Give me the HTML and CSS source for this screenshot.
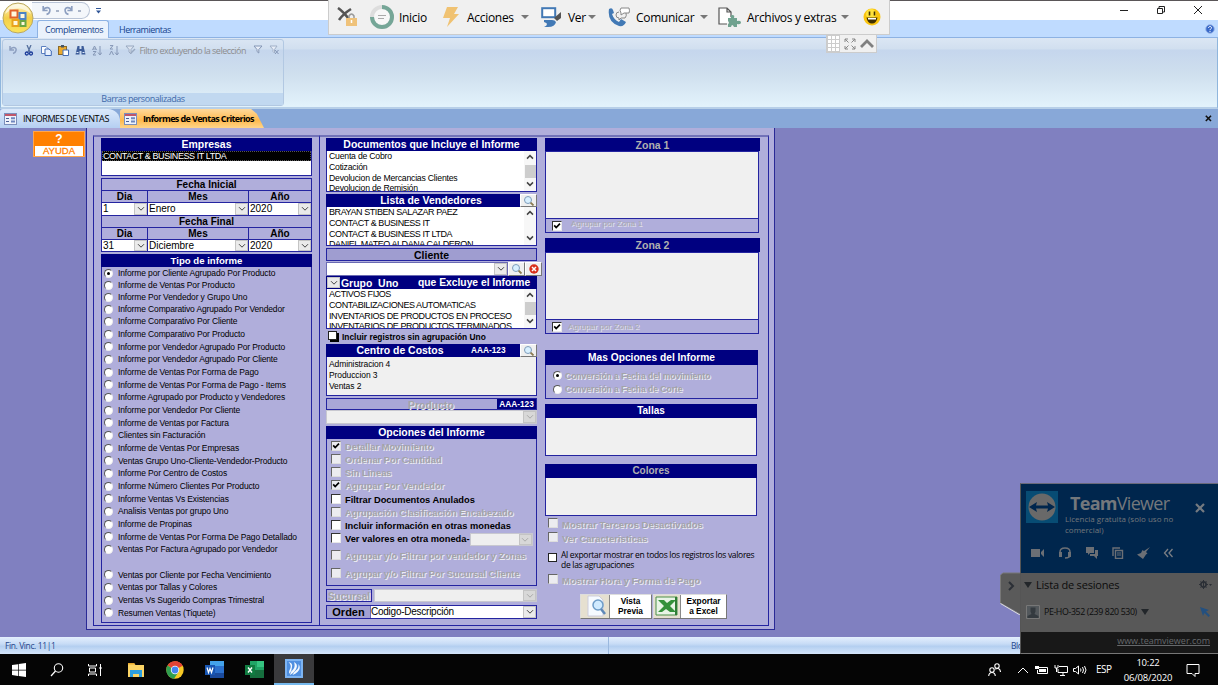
FILE: index.html
```html
<!DOCTYPE html>
<html lang="es">
<head>
<meta charset="utf-8">
<title>Informes de Ventas Criterios</title>
<link rel="stylesheet" href="styles.css">
</head>
<body>
<svg class="defs" width="0" height="0">
  <defs>
    <linearGradient id="gold" x1="0" y1="0" x2="0" y2="1"><stop offset="0" stop-color="#fff6c8"/><stop offset=".5" stop-color="#f3cf4a"/><stop offset="1" stop-color="#fbe45c"/></linearGradient>
    <symbol id="chev" viewBox="0 0 8 6"><path d="M1 1.2 4 4.2 7 1.2" fill="none" stroke="currentColor" stroke-width="1"/></symbol>
    <symbol id="chevup" viewBox="0 0 8 6"><path d="M1 4.6 4 1.6 7 4.6" fill="none" stroke="#444" stroke-width="1.5"/></symbol>
    <symbol id="chevdn" viewBox="0 0 8 6"><path d="M1 1.4 4 4.4 7 1.4" fill="none" stroke="#444" stroke-width="1.5"/></symbol>
    <symbol id="lens" viewBox="0 0 12 12"><circle cx="5" cy="5" r="3.5" fill="#d8f0ff" stroke="#7f9dbb" stroke-width="1"/><path d="M7.6 7.6 10.5 10.5" stroke="#8a7a50" stroke-width="1.8"/></symbol>
    <symbol id="tick" viewBox="0 0 8 8"><path d="M1.2 3.4 3.2 5.6 7 1.6" fill="none" stroke="#000" stroke-width="1.7"/></symbol>
    <symbol id="formico" viewBox="0 0 13 12"><rect x=".5" y=".5" width="12" height="11" fill="#eef2fb" stroke="#7c8fbb"/><path d="M1 1h11v2H1z" fill="#c0566a"/><path d="M2 5.5h3M2 8.5h3" stroke="#4a5f96"/><path d="M7 5.2h4M7 8.4h4" stroke="#6f86bd" stroke-width="2"/></symbol>
    <symbol id="undo" viewBox="0 0 10 10"><path d="M2 1v4h4M2 5C4 1 9 2 8 5.500Q7.500 8 5 8.500" fill="none" stroke="#8d9fc0" stroke-width="1.500"/></symbol>
  </defs>
</svg>

<div class="titlebar">
  <div class="qat">
    <svg width="11" height="11"><use href="#undo"/></svg><i class="dot"></i>
    <svg width="11" height="11" class="flip"><use href="#undo"/></svg><i class="dot"></i>
  </div>
  <svg class="qatmore" width="5" height="6" viewBox="0 0 5 6"><path d="M0 .5h5" stroke="#2f5597"/><path d="M0 2.500h5L2.500 5.500z" fill="#2f5597"/></svg>
  <div class="wincontrols">
    <svg width="10" height="10"><path d="M1 5.500h8" stroke="#222"/></svg>
    <svg width="10" height="10"><path d="M1.500 3.500h5v5h-5zM3 3V1.500h5.500V7H7" fill="none" stroke="#222"/></svg>
    <svg width="10" height="10"><path d="M1 1l8 8M9 1 1 9" stroke="#222"/></svg>
  </div>
</div>
<div class="tabs">
  <span class="tab active">Complementos</span><span class="tab">Herramientas</span>
  <svg class="help" width="10" height="10" viewBox="0 0 10 10"><circle cx="5" cy="5" r="4.300" fill="#3767c8" stroke="#9bb8ea"/><path d="M3.500 4C3.500 2 6.700 2 6.500 4 6.300 5 5 5 5 6.200M5 7v1" fill="none" stroke="#fff"/></svg>
</div>
<div class="office">
  <svg width="34" height="34" viewBox="0 0 34 34"><circle cx="17" cy="17" r="15" fill="url(#gold)" stroke="#b9a763"/><path d="M4 13Q17 2 30 13Q27 3 17 3 7 3 4 13z" fill="#fff" opacity=".6"/><g fill="#fff7dc" stroke-width="2"><rect x="9.500" y="9.500" width="7" height="7" stroke="#e2622b"/><rect x="18.500" y="12" width="6" height="6" stroke="#4a83c4"/><rect x="11.500" y="19" width="6" height="6" stroke="#e9a31c"/><rect x="19.500" y="20" width="5" height="5" stroke="#6ba644"/></g></svg>
</div>
<div class="ribbon">
  <div class="group">
    <div class="tools">
      <svg width="10" height="10"><use href="#undo"/></svg>
      <svg width="10" height="11" viewBox="0 0 10 11"><path d="M3 0 6 7M7 0 4 7" stroke="#56709e" stroke-width="1.300"/><circle cx="2.800" cy="8.500" r="1.500" fill="none" stroke="#1c3c9a" stroke-width="1.300"/><circle cx="7" cy="8.500" r="1.500" fill="none" stroke="#1c3c9a" stroke-width="1.300"/></svg>
      <svg width="11" height="11" viewBox="0 0 11 11"><path d="M.5 1.500h4.500l2 2v5H.5z" fill="#fff" stroke="#5b7fc0"/><path d="M4 4h4l2.300 2v4.500H4z" fill="#e8f0fd" stroke="#3f68b5"/></svg>
      <svg width="11" height="11" viewBox="0 0 11 11"><rect x=".5" y="1.500" width="8" height="8" fill="#eba92c" stroke="#8a6a2a"/><path d="M3 0h3v2.500H3z" fill="#456"/><path d="M5 5h5.500v5.500H5z" fill="#fff" stroke="#456eb5"/></svg>
      <svg width="11" height="11" viewBox="0 0 11 11"><path d="M2.500 1h2v3h2V1h2L10.500 9.500H6.500V6h-2v3.500H.5z" fill="#3d5d9a"/><path d="M1.500 7.500h2M7.500 7.500h2" stroke="#dce8fa"/></svg>
      <svg width="10" height="11" viewBox="0 0 10 11"><path d="M.5 5 2.500 1l2 4M1 4h3M1 6.500h3l-3 3.500h3M8 1v8M6 7.500 8 10l1.900-2.500" fill="none" stroke="#8496b5"/></svg>
      <svg width="10" height="11" viewBox="0 0 10 11"><path d="M1 .6h3L1 4h3M.5 10 2.500 6l2 4M8 1v8M6 7.500 8 10l1.900-2.500" fill="none" stroke="#8496b5"/></svg>
      <svg width="11" height="10" viewBox="0 0 11 10"><path d="M1 1h8L6 4.500V9L4 7V4.500z" fill="#dce4f0" stroke="#98a8c0"/><path d="M6 8l4-4" stroke="#98a8c0" stroke-width="1.500"/></svg>
      <span>Filtro excluyendo la selección</span>
      <svg width="10" height="10" viewBox="0 0 10 10"><path d="M1 1h8L5.800 4.500V8L4 6.500v-2z" fill="#e8eef8" stroke="#8496b5"/></svg>
      <svg width="10" height="10" viewBox="0 0 10 10"><path d="M1 1h7L5.500 4.500V8L4 6.500v-2z" fill="#e8eef8" stroke="#a0afc6"/><path d="M6 5l3.500 4M9.500 5 6 9" stroke="#8496b5"/></svg>
    </div>
    <div class="grouplabel">Barras personalizadas</div>
  </div>
</div>
<div class="doctabs">
  <div class="dtab"><svg width="13" height="12"><use href="#formico"/></svg><span>INFORMES DE VENTAS</span></div>
  <div class="dtab on"><svg width="13" height="12"><use href="#formico"/></svg><b>Informes de Ventas Criterios</b></div>
  <svg class="dclose" width="7" height="7"><path d="M.8 .8l5.200 5.200M6 .8.800 6" stroke="#111" stroke-width="1.600"/></svg>
</div>

<div class="main">
  <div class="ayuda"><b>?</b><span>AYUDA</span></div>
  <div class="form">
    <div class="frame fleft">
      <div class="hd">Empresas</div>
      <div class="emp"><div>CONTACT &amp; BUSINESS IT LTDA</div></div>
      <div class="dates">
        <div class="dt">Fecha Inicial</div>
        <div class="dr lab"><b>Dia</b><b>Mes</b><b>Año</b></div>
        <div class="dr val"><span>1<i><svg><use href="#chev"/></svg></i></span><span>Enero<i><svg><use href="#chev"/></svg></i></span><span>2020<i><svg><use href="#chev"/></svg></i></span></div>
        <div class="dt">Fecha Final</div>
        <div class="dr lab l2"><b>Dia</b><b>Mes</b><b>Año</b></div>
        <div class="dr val"><span>31<i><svg><use href="#chev"/></svg></i></span><span>Diciembre<i><svg><use href="#chev"/></svg></i></span><span>2020<i><svg><use href="#chev"/></svg></i></span></div>
      </div>
      <div class="hd small tipohd">Tipo de informe</div>
      <div class="tipos">
        <div class="on"><i></i>Informe por Cliente Agrupado Por Producto</div>
        <div><i></i>Informe de Ventas Por Producto</div>
        <div><i></i>Informe Por Vendedor y Grupo Uno</div>
        <div><i></i>Informe Comparativo Agrupado Por Vendedor</div>
        <div><i></i>Informe Comparativo Por Cliente</div>
        <div><i></i>Informe Comparativo Por Producto</div>
        <div><i></i>Informe por Vendedor Agrupado Por Producto</div>
        <div><i></i>Informe por Vendedor Agrupado Por Cliente</div>
        <div><i></i>Informe de Ventas Por Forma de Pago</div>
        <div><i></i>Informe de Ventas Por Forma de Pago - Items</div>
        <div><i></i>Informe Agrupado por Producto y Vendedores</div>
        <div><i></i>Informe por Vendedor Por Cliente</div>
        <div><i></i>Informe de Ventas por Factura</div>
        <div><i></i>Clientes sin Facturación</div>
        <div><i></i>Informe de Ventas Por Empresas</div>
        <div><i></i>Ventas Grupo Uno-Cliente-Vendedor-Producto</div>
        <div><i></i>Informe Por Centro de Costos</div>
        <div><i></i>Informe Número Clientes Por Producto</div>
        <div><i></i>Informe Ventas Vs Existencias</div>
        <div><i></i>Analisis Ventas por grupo Uno</div>
        <div><i></i>Informe de Propinas</div>
        <div><i></i>Informe de Ventas Por Forma De Pago Detallado</div>
        <div><i></i>Ventas Por Factura Agrupado por Vendedor</div>
        <div class="blank"></div>
        <div><i></i>Ventas por Cliente por Fecha Vencimiento</div>
        <div><i></i>Ventas por Tallas y Colores</div>
        <div><i></i>Ventas Vs Sugerido Compras Trimestral</div>
        <div><i></i>Resumen Ventas (Tiquete)</div>
      </div>
    </div>
    <div class="frame fright">
      <div class="c2">
        <div class="hd">Documentos que Incluye el Informe</div>
        <div class="list docs"><div class="items">Cuenta de Cobro<br>Cotización<br>Devolucion de Mercancias Clientes<br>Devolucion de Remisión</div><div class="sb"><svg><use href="#chevup"/></svg><u></u><svg><use href="#chevdn"/></svg></div></div>
        <div class="hd g2"><span>Lista de Vendedores</span><em class="lb"><svg width="12" height="12"><use href="#lens"/></svg></em></div>
        <div class="list vend"><div class="items">BRAYAN STIBEN SALAZAR PAEZ<br>CONTACT &amp; BUSINESS IT<br>CONTACT &amp; BUSINESS IT LTDA<br>DANIEL MATEO ALDANA CALDERON</div><div class="sb"><svg><use href="#chevup"/></svg><svg><use href="#chevdn"/></svg></div></div>
        <div class="bar cliente">Cliente</div>
        <div class="clirow"><span class="combo"><i><svg><use href="#chev"/></svg></i></span><em class="lb"><svg width="12" height="12"><use href="#lens"/></svg></em><em class="lb"><svg width="10" height="10" viewBox="0 0 10 10"><circle cx="5" cy="5" r="4.700" fill="#d8301c"/><path d="M3 3l4 4M7 3 3 7" stroke="#fff" stroke-width="1.500"/></svg></em></div>
        <div class="hd grupo"><i><svg><use href="#chev"/></svg></i><span>Grupo&nbsp; Uno</span><b>que Excluye el Informe</b></div>
        <div class="list grp"><div class="items">ACTIVOS FIJOS<br>CONTABILIZACIONES AUTOMATICAS<br>INVENTARIOS DE PRODUCTOS EN PROCESO<br>INVENTARIOS DE PRODUCTOS TERMINADOS</div><div class="sb"><svg><use href="#chevup"/></svg><u></u><svg><use href="#chevdn"/></svg></div></div>
        <div class="incl"><i></i>Incluir registros sin agrupación Uno</div>
        <div class="hd centro"><span>Centro de Costos</span><small>AAA-123</small><em class="lb"><svg width="12" height="12"><use href="#lens"/></svg></em></div>
        <div class="list cc"><div class="items">Administracion 4<br>Produccion 3<br>Ventas 2</div></div>
        <div class="prod"><span class="emb">Producto</span><small>AAA-123</small></div>
        <div class="combo dis prodc"><i><svg><use href="#chev"/></svg></i></div>
        <div class="hd ophd">Opciones del Informe</div>
        <div class="opts">
          <div class="d"><i class="ck"><svg width="8" height="8"><use href="#tick"/></svg></i>Detallar Movimiento</div>
          <div class="d"><i class="ck"></i>Ordenar Por Cantidad</div>
          <div class="d"><i class="ck"></i>Sin Lineas</div>
          <div class="d"><i class="ck"><svg width="8" height="8"><use href="#tick"/></svg></i>Agrupar Por Vendedor</div>
          <div><i class="ck"></i>Filtrar Documentos Anulados</div>
          <div class="d"><i class="ck"></i>Agrupación Clasificación Encabezado</div>
          <div><i class="ck"></i>Incluir información en otras monedas</div>
          <div class="mon"><i class="ck"></i><span>Ver valores en otra moneda-</span><span class="combo dis"><i><svg><use href="#chev"/></svg></i></span></div>
          <div class="d tall"><i class="ck"></i>Agrupar y/o Filtrar por vendedor y Zonas</div>
          <div class="d tall2"><i class="ck"></i>Agrupar y/o Filtrar Por Sucursal Cliente</div>
        </div>
        <div class="suc"><span class="emb">Sucursal</span><span class="combo dis"><i><svg><use href="#chev"/></svg></i></span></div>
        <div class="ord"><b>Orden</b><span class="combo">Codigo-Descripción<i><svg><use href="#chev"/></svg></i></span></div>
      </div>
      <div class="c3">
        <div class="hd gray z">Zona 1</div><div class="pane zp"></div>
        <div class="zf"><i class="ck"><svg width="8" height="8"><use href="#tick"/></svg></i><span>Agrupar por Zona 1</span></div>
        <div class="hd gray z z2">Zona 2</div><div class="pane zp"></div>
        <div class="zf f2"><i class="ck"><svg width="8" height="8"><use href="#tick"/></svg></i><span>Agrupar por Zona 2</span></div>
        <div class="hd mas">Mas Opciones del Informe</div>
        <div class="conv"><div class="on"><i></i>Conversión a Fecha del movimiento</div><div><i></i>Conversión a Fecha de Corte</div></div>
        <div class="hd tl">Tallas</div><div class="pane tp"></div>
        <div class="hd gray tl co">Colores</div><div class="pane tp"></div>
        <div class="chk3">
          <div class="d"><i class="ck"></i>Mostrar Terceros Desactivados</div>
          <div class="d"><i class="ck"></i>Ver Caracteristicas</div>
          <div class="exp"><i></i><span>Al exportar mostrar en todos los registros los valores<br>de las agrupaciones</span></div>
          <div class="d"><i class="ck"></i>Mostrar Hora y Forma de Pago</div>
        </div>
        <div class="btns">
          <div class="btn"><em><svg width="22" height="22" viewBox="0 0 22 22"><path d="M3 1h11l4 4v16H3z" fill="#f6faff" stroke="#ccd"/><circle cx="13" cy="10" r="5" fill="#cfeaff" stroke="#6d9cc8" stroke-width="1.500"/><path d="M16 14l4 5" stroke="#5f88b8" stroke-width="2.500"/></svg></em><b>Vista<br>Previa</b></div>
          <div class="btn x"><em><svg width="24" height="22" viewBox="0 0 24 22"><path d="M1 2h21v18H1z" fill="#e9f4e6" stroke="#4d8f4b"/><path d="M3 5h6l3 3 4-3h5l-6 6 6 6h-6l-4-3-4 3H3l6-6z" fill="#35913b"/><path d="M21 2v18" stroke="#2f7d36" stroke-width="2"/></svg></em><b>Exportar<br>a Excel</b></div>
        </div>
      </div>
    </div>
  </div>
</div>

<div class="status"><span class="fin">Fin. Vinc. 11|1</span><span class="blo">Bloq Mayús</span></div>
<div class="taskbar">
  <div class="apps">
    <div><svg width="14" height="14" viewBox="0 0 14 14"><path d="M0 2 6 1.200v5.500H0zM6.700 1 14 0v6.700H6.700zM0 7.400h6v5.500L0 12zM6.700 7.400H14V14l-7.300-1z" fill="#fff"/></svg></div>
    <div><svg width="14" height="14" viewBox="0 0 14 14"><circle cx="8.500" cy="5" r="4.200" fill="none" stroke="#fff" stroke-width="1.100"/><path d="M5.500 8 1 13" stroke="#fff" stroke-width="1.200"/></svg></div>
    <div><svg width="14" height="14" viewBox="0 0 14 14"><path d="M.5 1v2h8V1M1.500 5h6v4h-6zM.5 13v-2h8v2M12.500 1v12" fill="none" stroke="#fff"/><path d="M11.500 4h2v2h-2z" fill="#fff"/></svg></div>
    <div><svg width="18" height="16" viewBox="0 0 18 16"><path d="M1 1h6l1.500 2H17v12H1z" fill="#fcd566"/><path d="M1 1h6l1 1.500H1z" fill="#e8a92d"/><path d="M3 8h12v7h-3v-3H6v3H3z" fill="#2c9fe0"/></svg></div>
    <div><svg width="18" height="18" viewBox="0 0 18 18"><circle cx="9" cy="9" r="8.700" fill="#f7c925"/><path d="M9 9 1.500 4.600A8.700 8.700 0 0 1 16.600 4.800z" fill="#e14334"/><path d="M9 9 1.500 4.600A8.700 8.700 0 0 0 8 17.650L12.500 11z" fill="#2f9e50"/><path d="M9 4.800h7.600A8.700 8.700 0 0 0 9 .3z" fill="#e14334"/><circle cx="9" cy="9" r="4.200" fill="#fff"/><circle cx="9" cy="9" r="3.400" fill="#4384ee"/></svg></div>
    <div><svg width="19" height="17" viewBox="0 0 19 17"><path d="M5 0h14v17H5z" fill="#2b70cc"/><path d="M5 0h14v5H5z" fill="#43a2ea"/><path d="M5 12h14v5H5z" fill="#1a4a9c"/><path d="M0 4h10v10H0z" fill="#1856b3"/><path d="M2 6.500 3.500 11.500 5 7.500 6.500 11.500 8 6.500" fill="none" stroke="#fff" stroke-width="1.200"/></svg></div>
    <div><svg width="19" height="17" viewBox="0 0 19 17"><path d="M5 0h14v17H5z" fill="#20a466"/><path d="M12 0h7v6h-7z" fill="#36c481"/><path d="M5 9h14v8H5z" fill="#166f3e"/><path d="M0 4h10v10H0z" fill="#107c41"/><path d="M3 6.500 7 11.500M7 6.500 3 11.500" stroke="#fff" stroke-width="1.400"/></svg></div>
    <div class="cur"><svg width="18" height="19" viewBox="0 0 18 19"><path d="M0 0h18v19H0z" fill="#7db4f2"/><path d="M2 2h14v15H2z" fill="#4f8fe0"/><path d="M3.500 3Q8 4 7 8q0 4-3 7 0-4 1.500-6Q6.500 6 3.500 3M9 3q4 2 2.500 6Q10 13 5 16q0-3 3.500-6 2-3 .5-7M13.500 5q3 4-1 8-2 2-5 3 1-3 3.500-4.500 3-2 2.500-6.500" fill="#f4f9ff"/></svg></div>
  </div>
  <div class="tray">
    <svg width="13" height="14" viewBox="0 0 13 14"><g fill="none" stroke="#fff" stroke-width="1.100"><circle cx="9" cy="3" r="2.200"/><circle cx="4" cy="7" r="2.200"/><path d="M.7 13Q1 9.500 4 9.500T7.300 13M7 6Q12 4 12.500 9"/></g></svg>
    <svg class="t1" width="12" height="8"><path d="M1 7l5-5 5 5" fill="none" stroke="#fff"/></svg>
    <svg class="t2" width="14" height="10" viewBox="0 0 14 10"><path d="M4 2.500h8.500v6H2.500V5" fill="none" stroke="#fff"/><path d="M4 4h7v3H4z" fill="#fff"/><path d="M0 1h4v3H0z" fill="#fff"/></svg>
    <svg class="t3" width="14" height="12" viewBox="0 0 14 12"><path d="M5 2.500h8.500v6H4V5M6 11.500h5M9 9v2M1 1v3h3V1M2.500 4v4" fill="none" stroke="#fff"/></svg>
    <svg class="t4" width="14" height="10" viewBox="0 0 14 10"><path d="M.5 3.500h2L5.500 1v8l-3-2.500h-2zM7.500 3.500q1 1.500 0 3M9.500 2q2 3 0 6M11.500 1q3 4 0 8" fill="none" stroke="#fff"/></svg>
    <span class="esp">ESP</span>
    <span class="clock">10:22<br>06/08/2020</span>
    <svg class="note" width="14" height="14" viewBox="0 0 14 14"><path d="M1 1.500h12v9H9v3L6 10.500H1z" fill="none" stroke="#fff"/></svg>
  </div>
</div>

<div class="tvbar">
  <svg class="b1" width="21" height="20" viewBox="0 0 21 20"><path d="M1 1Q7 5 14 15M14 2Q6 7 2 13" fill="none" stroke="#555" stroke-width="2.600"/><path d="M12 11V9q2.500-4 5 0v2" fill="none" stroke="#999" stroke-width="1.500"/><rect x="9" y="11" width="11" height="8" fill="#efc27a"/><path d="M14.500 13v3" stroke="#fff" stroke-width="1.500"/></svg>
  <svg class="b2" width="24" height="24" viewBox="0 0 24 24"><circle cx="12" cy="12" r="10" fill="#f7f7f7" stroke="#ddd" stroke-width="4"/><path d="M12 2a10 10 0 1 1-10 10" fill="none" stroke="#75a697" stroke-width="4"/><path d="M8 10.500h8M8 13.500h6" stroke="#aaa"/></svg>
  <span class="s1">Inicio</span>
  <svg class="b3" width="16" height="20" viewBox="0 0 16 20"><path d="M4 0h11L11 7h5L4 20l3-9H0z" fill="#f0c272"/></svg>
  <span class="s2">Acciones</span><u></u>
  <svg class="b4" width="21" height="20" viewBox="0 0 21 20"><rect x="1.200" y="1.200" width="13" height="9" fill="#fff" stroke="#4279b5" stroke-width="2"/><path d="M13 11 20 5v6l-4 3z" fill="#555"/><path d="M3 13h8q3 0 4 2-1 5-8 5H3q3-1 3-3Q6 16 3 15z" fill="#4279b5"/></svg>
  <span class="s3">Ver</span><u></u>
  <svg class="b5" width="23" height="20" viewBox="0 0 23 20"><path d="M1 2q3-2 4 1l1 3-2 1q2 6 7 8l2-3 5 3q-2 5-7 4Q-1 15 1 2" fill="#4279b5"/><path d="M13 1h8q1 3 0 5h-5l-3 2V6q-2-3 0-5" fill="#fff" stroke="#888"/><path d="M11 5q-3 0-3 3t3 3v2l2-2h4q2-2 1-5" fill="none" stroke="#888"/></svg>
  <span class="s4">Comunicar</span><u></u>
  <svg class="b6" width="24" height="21" viewBox="0 0 24 21"><path d="M9 17H1V1h8l4 4v5M9 1v4h4" fill="#fff" stroke="#555" stroke-width="1.200"/><path d="M10 11h3q-1-3 1.500-3t1.500 3h3v3q4-1 4 1.500T19 17v3h-3q-2-4-3 0h-3v-3q2-1 0-3z" fill="#70a28f"/></svg>
  <span class="s5">Archivos y extras</span><u></u>
  <svg class="b7" width="18" height="18" viewBox="0 0 18 18"><circle cx="9" cy="9" r="8.500" fill="#fac40e"/><circle cx="8" cy="6" r="5" fill="#ffe23b"/><path d="M6.500 3.500v4M11.500 3.500v4" stroke="#403000" stroke-width="1.600"/><path d="M3.500 9.500h11q-1 6-5.500 6t-5.500-6" fill="#403000"/><path d="M5 10h8v1.500H5z" fill="#fff"/></svg>
</div>
<div class="tvgrip"><i></i>
  <svg width="12" height="12" viewBox="0 0 12 12"><path d="M1 4V1h3M8 1h3v3M11 8v3H8M4 11H1V8M1 1l3.500 3.500M11 1 7.500 4.500M11 11 7.500 7.500M1 11l3.500-3.500" fill="none" stroke="#888"/></svg>
  <svg width="14" height="9" viewBox="0 0 14 9"><path d="M1 8l6-6 6 6" fill="none" stroke="#808080" stroke-width="2.800"/></svg>
</div>

<div class="tvhandle"><svg width="21" height="43" viewBox="0 0 21 43"><path d="M20 1H3L.5 3v28L20 42" fill="#5a5a5a" stroke="#777"/><path d="M20 43 .5 31.500" stroke="#ddd"/><path d="M9 10l4 4-4 4" fill="none" stroke="#2b2f36" stroke-width="2"/></svg></div>
<div class="tv">
  <div class="tvtop">
    <div class="tvhead">
      <svg width="32" height="32" viewBox="0 0 32 32"><path d="M0 0h32v32H0z" fill="#074c74"/><circle cx="16" cy="16" r="13.500" fill="#696969"/><path d="M3 16l8-5-1 3.500h12L21 11l8 5-8 5 1-3.500H10l1 3.500z" fill="#00264d"/></svg>
      <div class="tvname"><p><b>Team</b>Viewer</p><small>Licencia gratuita (solo uso no<br>comercial)</small></div>
      <svg class="tvx" width="10" height="10"><path d="M1 1l8 8M9 1 1 9" stroke="#747a80" stroke-width="2.200"/></svg>
    </div>
    <div class="tvicons">
      <svg width="14" height="12" viewBox="0 0 14 12"><path d="M0 2h9v8H0zM10 5l3-3v8l-3-3z" fill="#6b6f75"/></svg>
      <svg width="14" height="12" viewBox="0 0 14 12"><path d="M2 8V5q0-4 5-4t5 4v3M12 8q0 3-5 3" fill="none" stroke="#6b6f75" stroke-width="1.500"/><path d="M1 5h3v5H1zM10 5h3v5h-3z" fill="#6b6f75"/></svg>
      <svg width="14" height="12" viewBox="0 0 14 12"><path d="M1 0h8v6H5L3 8V6H1zM10 3h3v6h-1v3l-3-3H5V7h5z" fill="#6b6f75"/></svg>
      <svg width="12" height="12" viewBox="0 0 12 12"><path d="M1 9V1h7M3.500 3.500h7v8h-7z" fill="none" stroke="#6b6f75" stroke-width="1.400"/><path d="M5 6h4M5 8h4" stroke="#6b6f75"/></svg>
      <svg width="13" height="12" viewBox="0 0 13 12"><path d="M13 0 9 5l1.500 1.500-1.500 1L6 12 0 7.500l4-1.500L5.500 3 7 4z" fill="#6b6f75"/></svg>
      <svg width="12" height="12" viewBox="0 0 12 12"><path d="M5 2 1.500 6 5 10M9.500 2 6 6l3.500 4" fill="none" stroke="#7b7f85" stroke-width="1.300"/></svg>
    </div>
  </div>
  <div class="tvmid">
    <div class="ses"><i></i><span>Lista de sesiones</span><svg width="13" height="9" viewBox="0 0 13 9"><circle cx="4.500" cy="4.500" r="2.600" fill="none" stroke="#2b2f36" stroke-width="1.700"/><path d="M4.500 0v9M0 4.500h2M7 4.500h2M1.500 1.500l1 1M7.500 1.500l-1 1M1.500 7.500l1-1M7.500 7.500l-1-1" stroke="#2b2f36"/><path d="M10 4h3l-1.500 2z" fill="#2b2f36"/></svg></div>
    <div class="pe"><svg width="14" height="14" viewBox="0 0 14 14"><path d="M.5 .5h13v13H.5z" fill="#53585c" stroke="#777"/><path d="M4.500 2.500h5v4L8.500 9l4 2v2h-11v-2l4-2-1-2.500z" fill="#343a3f"/></svg><span>PE-HO-352 (239 820 530)</span><i></i><svg class="arrow" width="10" height="10" viewBox="0 0 10 10"><path d="M0 0l9 3-3 1.500L10 8.500 8.500 10 4.500 6 3 9z" fill="#24507f"/></svg></div>
  </div>
  <div class="tvweb">www.teamviewer.com</div>
</div>
</body>
</html>
```

FILE: styles.css
```css
* { box-sizing: border-box; }
body { margin: 0; width: 1218px; height: 685px; overflow: hidden; position: relative; display: flex; flex-direction: column; background: #8080c0; font-family: "Liberation Sans", Arial, sans-serif; font-size: 9px; color: #000; }
svg { display: block; flex: none; }
i, em { font-style: normal; flex: none; }
u { text-decoration: none; flex: none; }
.defs { position: absolute; }

/* window chrome */
.titlebar { height: 20px; flex: none; background: #fff; border-top: 1px solid #5a5658; display: flex; align-items: flex-start; padding-left: 32px; }
.qat { width: 58px; height: 17px; margin-top: 1px; border: 1px solid #b9c4d6; border-left: 0; border-radius: 0 9px 9px 0; background: #f4f7fb; display: flex; align-items: center; gap: 4px; padding-left: 9px; }
.flip { transform: scaleX(-1); }
.dot { width: 3px; height: 2px; background: #a9b4c8; }
.qatmore { margin: 7px 0 0 6px; }
.wincontrols { margin-left: auto; display: flex; gap: 27px; padding: 4px 15px 0 0; }
.tabs { height: 18px; flex: none; background: #bfdbff; border-bottom: 1px solid #8db2e3; display: flex; padding-left: 37px; font: 9px/17px "Open Sans", sans-serif; letter-spacing: -.5px; color: #15428b; white-space: nowrap; }
.tab { padding: 1px 8px 0; height: 17px; }
.tab.active { width: 72px; background: #eaf2fc; border: 1px solid #8db2e3; border-bottom: 0; border-radius: 3px 3px 0 0; height: 18px; margin-right: 2px; padding: 0 7px; }
.help { margin: 4px 3px 0 auto; }
.office { position: absolute; left: 1px; top: 1px; }
.ribbon { height: 71px; flex: none; background: linear-gradient(#dbe6f4 0, #d1dfef 11px, #c5d6ed 12px, #cfdfee 36px, #e2f2fb 68px); border: 1px solid #8fb6dd; border-top: 0; border-bottom: 2px solid #b7cfe8; padding: 1px 0 0 1px; }
.group { width: 282px; height: 67px; border: 1px solid #b2c8e2; border-radius: 3px; display: flex; flex-direction: column; justify-content: space-between; }
.tools { display: flex; align-items: center; gap: 6.300px; padding: 3px 0 0 5px; height: 17px; font: 9px "Open Sans", sans-serif; color: #8d8d8d; white-space: nowrap; }
.tools span { width: 107px; margin-left: -3px; letter-spacing: -.52px; }
.grouplabel { height: 12px; background: #c1d8f0; color: #3e6aaa; font: 9px/12px "Open Sans", sans-serif; letter-spacing: -.45px; text-align: center; }
.doctabs { height: 19px; flex: none; background: #88a8d8; display: flex; font: 9px/18px "Open Sans", sans-serif; white-space: nowrap; }
.dtab { display: flex; align-items: center; height: 19px; width: 120px; padding-left: 4px; gap: 6px; background: linear-gradient(#dbe9fb, #b5cff2); border-radius: 3px 12px 0 0; letter-spacing: -.42px; }
.dtab.on { width: 144px; background: linear-gradient(#ffd99c, #ffb94e 60%, #ffd58a); clip-path: polygon(0 0, 91% 0, 95% 25%, 100% 100%, 0 100%); letter-spacing: -.62px; }
.dclose { margin: 6px 6px 0 auto; }

/* form body */
.main { height: 509px; flex: none; display: flex; align-items: flex-start; background: #8080c0; }
.ayuda { width: 52px; height: 26px; margin: 3px 0 0 33px; background: #ff8000; border: 1px solid #ffa64d; color: #fff; display: flex; flex-direction: column; align-items: center; }
.ayuda b { font-size: 12px; line-height: 14px; }
.ayuda span { width: 48px; background: #fff; color: #ff8000; font-size: 9.500px; line-height: 10px; text-align: center; -webkit-text-stroke: .3px #ff8000; }
.form { width: 689px; height: 502px; margin-left: 1px; background: #b0aedb; border: 1px solid #2a2a96; border-top: 0; display: flex; padding: 7px 5px 3px 6px; }
.frame { border: 1px solid #2424a0; height: 491px; }
.fleft { width: 227px; padding: 1px 7px 0 7px; border-top: 2px solid #7272b8; }
.fright { width: 449px; border-left: 0; padding: 1px 0 0 6px; display: flex; gap: 8px; border-top: 2px solid #7272b8; }
.hd { height: 13px; background: #000080; color: #fff; font-weight: bold; font-size: 10.450px; line-height: 14px; text-align: center; }
.hd.small { font-size: 9.600px; line-height: 13px; }
.hd.gray { color: #b0b0b0; }
.emp { height: 25px; border: 1px solid #2424a0; border-top: 0; background: #fff; }
.emp div { height: 10px; background: #000; color: #fff; font-size: 9px; letter-spacing: -.42px; line-height: 11px; padding-left: 1px; outline: 1px dotted #555; outline-offset: -1px; }
.dates { margin-top: 2px; border: 1px solid #2424a0; background: #b0aedb; }
.dt { text-align: center; font-weight: bold; font-size: 10px; line-height: 12px; height: 12px; border-bottom: 1px solid #2424a0; }
.dr { display: grid; grid-template-columns: 45px 101px 1fr; }
.dr > * + * { border-left: 1px solid #2424a0; }
.dr b { font-size: 10px; line-height: 11px; text-align: center; }
.lab { height: 12px; border-bottom: 1px solid #2424a0; }
.val { height: 13px; border-bottom: 1px solid #2424a0; }
.val:last-child { border: 0; height: 11px; }
.val span { background: #fff; display: flex; justify-content: space-between; font-size: 10px; line-height: 12px; padding-left: 1px; overflow: hidden; }
.val i, .combo i, .grupo i { width: 13px; background: #eaeaea; border: 1px solid #c4c4c4; display: flex; align-items: center; justify-content: center; color: #444; }
.val svg, .combo svg, .grupo i svg { width: 8px; height: 6px; }
.tipohd { margin-top: 2px; }
.tipos { border: 1px solid #2424a0; border-top: 0; height: 356px; padding: 0 0 0 2px; font-size: 8.500px; }
.tipos div { display: flex; align-items: center; gap: 5px; height: 12.680px; white-space: nowrap; letter-spacing: -.14px; }
.tipos div:nth-child(-n+4) { height: 12px; }
.tipos i, .conv i { width: 9px; height: 9px; border-radius: 50%; background: #fff; border: 1px solid #555; border-right-color: #eee; border-bottom-color: #eee; display: flex; align-items: center; justify-content: center; }
.on > i::after { content: ""; width: 3px; height: 3px; border-radius: 50%; background: #000; }

/* middle column */
.c2 { width: 211px; }
.list { border: 1px solid #2424a0; border-top: 0; background: #fff; display: flex; justify-content: space-between; overflow: hidden; font-size: 9px; letter-spacing: -.43px; line-height: 10.800px; white-space: nowrap; }
.items { padding-left: 2px; }
.docs { height: 41px; font-size: 8.700px; letter-spacing: -.22px; }
.sb { width: 12px; display: flex; flex-direction: column; align-items: center; justify-content: space-between; padding: 3px 0 4px; background: #f7f7f7; }
.sb svg { width: 8px; height: 6px; }
.sb u { width: 11px; height: 13px; background: #cdcdcd; margin-bottom: -1px; }
.g2 { margin-top: 2px; display: flex; }
.g2 span { flex: 1; padding-left: 16px; }
.lb { width: 17px; height: 13px; background: #f0f0f0; border: 1px solid #fff; border-right-color: #777; border-bottom-color: #777; display: flex; align-items: center; justify-content: center; overflow: hidden; }
.vend { height: 39px; }
.bar { background: #9f9dd0; border: 1px solid #2424a0; font-weight: bold; font-size: 10.500px; text-align: center; }
.cliente { margin-top: 2px; height: 13px; line-height: 12px; }
.clirow { height: 14px; margin-top: 1px; display: flex; width: 216px; }
.clirow .lb { height: 14px; width: 17px; }
.combo { background: #fff; display: flex; justify-content: space-between; border: 1px solid #6a6ab4; }
.combo i { margin-left: auto; }
.clirow .combo { width: 182px; }
.dis { background: #efefef; border-color: #c8c8d0; }
.dis i { background: #d8d8d8; color: #aaa; }
.grupo { display: flex; padding-left: 1px; }
.grupo i { height: 11px; margin-top: 1px; }
.grupo span { line-height: 16px; height: 13px; overflow: hidden; padding-left: 1px; width: 76px; text-align: left; }
.grupo b { font-size: 10.300px; margin-left: 2px; white-space: nowrap; }
.grp { height: 40px; }
.incl { height: 14px; display: flex; align-items: center; gap: 5px; font-weight: bold; font-size: 8.400px; padding: 2px 0 0 2px; white-space: nowrap; }
.incl i { width: 9px; height: 9px; background: #fff; border: 1px solid #222; box-shadow: 2px 2px #000; margin-top: -4px; }
.centro { display: flex; margin-top: 1px; }
.centro span { width: 145px; padding-left: 3px; }
.centro small { flex: 1; font-size: 8.300px; line-height: 12px; text-align: left; }
.cc { height: 39px; background: #f0f0f0; padding-top: 2px; font-size: 8.500px; letter-spacing: -.1px; }
.prod { height: 12px; margin-top: 2px; display: flex; border: 1px solid #2424a0; background: #a9a7d7; }
.emb { flex: 1; text-align: center; }
.emb, .d, .conv div { color: #a3a3a8; text-shadow: 1px 1px #ececf2; font-weight: bold; }
.prod .emb { font-size: 10.500px; line-height: 13px; padding-left: 38px; }
.prod small { width: 39px; background: #000080; color: #fff; font-weight: bold; font-size: 8.300px; line-height: 10px; text-align: center; }
.prodc { height: 14px; }
.ophd { margin-top: 2px; }
.opts { height: 147px; border: 1px solid #2424a0; border-top: 0; padding: 1px 0 0 4px; font-size: 9.300px; font-weight: bold; }
.opts > div { height: 13.250px; display: flex; align-items: center; gap: 4px; white-space: nowrap; line-height: 15px; padding-top: 1px; }
.ck { width: 10px; height: 10px; background: #fff; border: 1px solid #333; border-right-color: #e8e8e8; border-bottom-color: #e8e8e8; margin-top: -3px; display: flex; align-items: center; justify-content: center; }
.d .ck { background: #ececf0; border-color: #666 #ddd #ddd #666; }
.mon .combo { width: 63px; height: 13px; margin-left: -4px; }
.opts .tall { height: 19px; }
.opts .tall2 { height: 17px; }
.suc { margin-top: 3px; height: 13px; display: flex; gap: 2px; }
.suc .emb { flex: none; width: 46px; border: 1px solid #2424a0; font-size: 10px; line-height: 13px; }
.suc .combo { flex: 1; }
.ord { margin-top: 3px; height: 14px; display: flex; border: 1px solid #2424a0; }
.ord b { width: 43px; background: #a2a0d2; font-size: 11px; line-height: 13px; text-align: center; }
.ord .combo { flex: 1; border-width: 0 0 0 1px; font-size: 10px; letter-spacing: -.25px; line-height: 11px; }

/* right column */
.c3 { width: 215px; }
.z { font-size: 10.500px; }
.pane { background: #f0f0f0; border: 1px solid #2424a0; }
.zp { width: 214px; height: 67px; border-bottom: 0; }
.zf { width: 214px; height: 15px; border: 1px solid #2424a0; display: flex; align-items: center; padding-left: 6px; gap: 9px; font-size: 8px; color: #a8a8ae; text-shadow: 1px 1px #e6e6ee; }
.zf .ck { margin-top: 0; }
.zf span { line-height: 10px; margin-top: -4px; letter-spacing: .1px; }
.z2 { margin-top: 5px; height: 14px; }
.f2 { gap: 6px; }
.f2 span { margin-top: 0; }
.mas { width: 213px; margin-top: 16px; height: 15px; font-size: 10.200px; line-height: 15px; }
.conv { width: 213px; height: 34px; border: 1px solid #2424a0; border-top: 0; padding: 4px 0 0 7px; }
.conv div { display: flex; align-items: center; gap: 3px; height: 13.500px; font-size: 8.600px; letter-spacing: -.05px; }
.tl { width: 212px; height: 14px; margin-top: 5px; font-size: 10px; }
.co { margin-top: 8px; }
.tp { width: 212px; height: 38px; border-top: 0; }
.chk3 { padding: 1px 0 0 3px; font-size: 9.500px; }
.chk3 > div { display: flex; align-items: center; gap: 4px; height: 14.500px; white-space: nowrap; }
.chk3 .exp { height: 27px; font: 8.500px/10px "Open Sans", sans-serif; align-items: center; letter-spacing: -.3px; }
.exp i { width: 9px; height: 9px; background: #fff; border: 1px solid #222; margin-bottom: 4px; }
.btns { display: flex; gap: 1px; padding: 6px 0 0 35px; }
.btn { width: 72px; height: 25px; background: #fff; border: 1px solid #ddd; border-right-color: #777; border-bottom-color: #777; display: flex; align-items: center; font-size: 9px; line-height: 10px; text-align: center; }
.btn em { width: 29px; height: 23px; background: #e6e0d0; border-right: 1px solid #888; padding-left: 4px; overflow: hidden; }
.btn b { flex: 1; font-size: 8.300px; }
.btn.x { width: 74px; }
.btn.x em { width: 27px; padding-left: 1px; }

/* status and taskbar */
.status { height: 17px; flex: none; display: flex; background: linear-gradient(#e4effd, #c8dcf6 40%, #b4cff0 55%, #d5e6fb); color: #26468c; font: 8.500px/17px "Open Sans", sans-serif; letter-spacing: -.4px; padding-left: 5px; }
.fin { width: 604px; border-right: 1px solid #9ab8de; }
.status .blo { margin-left: 402px; }
.taskbar { height: 31px; flex: none; background: #050505; display: flex; justify-content: space-between; color: #fff; }
.apps { display: flex; }
.apps div { width: 39.500px; height: 31px; display: flex; align-items: center; justify-content: center; }
.apps div:nth-child(-n+3) { width: 38px; }
.apps div:nth-child(4) { margin-left: 2px; }
.apps .cur { background: #3a3a3c; border-bottom: 2px solid #76b9ed; }
.tray { display: flex; align-items: center; width: 230px; font: 10px/15px "Open Sans", sans-serif; }
.tray .t1 { margin-left: 16px; } .tray .t2 { margin-left: 6px; } .tray .t3 { margin-left: 5px; } .tray .t4 { margin-left: 5px; }
.esp { margin-left: 9px; width: 17px; letter-spacing: -.5px; }
.clock { width: 60px; margin-left: 5px; text-align: center; font-size: 9.500px; letter-spacing: -.2px; }
.note { margin-left: 8px; }

/* remote session toolbar */
.tvbar { position: absolute; left: 328px; top: 0; width: 562px; height: 35px; background: #f0f0f0; border: 1px solid #ccc; border-top: 0; display: flex; align-items: center; font: 12px "Open Sans", sans-serif; letter-spacing: -.3px; }
.tvbar span { flex: none; white-space: nowrap; padding-top: 1px; }
.tvbar u { border: 4px solid transparent; border-top-color: #777; border-bottom: 0; margin-left: 4px; }
.b1 { margin-left: 8px; } .b2 { margin-left: 12px; } .s1 { margin-left: 5px; width: 36px; }
.b3 { margin-left: 8px; } .s2 { margin-left: 8px; width: 50px; }
.b4 { margin-left: 12px; } .s3 { margin-left: 6px; width: 16px; }
.b5 { margin-left: 12px; } .s4 { margin-left: 5px; width: 60px; }
.b6 { margin-left: 10px; } .s5 { margin-left: 5px; width: 90px; }
.b7 { margin-left: 14px; }
.tvgrip { position: absolute; left: 826px; top: 35px; width: 51px; height: 18px; background: #f0f0f0; border: 1px solid #ccc; border-top: 0; display: flex; align-items: center; gap: 4px; }
.tvgrip i { width: 13px; height: 17px; background: repeating-linear-gradient(90deg, #ccc 0 1px, transparent 1px 4px), repeating-linear-gradient(#ccc 0 1px, #fff 1px 4px); }

/* remote session panel */
.tvhandle { position: absolute; left: 1000px; top: 572px; }
.tv { position: absolute; left: 1020px; top: 483px; width: 198px; height: 171px; background: #585858; border-left: 1px solid #555; border-top: 1px solid #6a6a7a; border-bottom: 1px solid #777; display: flex; flex-direction: column; font-family: "Open Sans", sans-serif; }
.tvtop { height: 89px; background: #00264d; }
.tvhead { display: flex; padding: 7px 0 0 5px; height: 60px; }
.tvname { margin-left: 7px; width: 124px; color: #74787c; }
.tvname p { margin: 0 0 0 5px; font-size: 18px; line-height: 25px; letter-spacing: -.7px; }
.tvname small { display: block; font-size: 8px; line-height: 10.500px; white-space: nowrap; margin-top: -2px; }
.tvx { margin: 12px 0 0 6px; }
.tvicons { display: flex; gap: 13px; padding: 3px 0 0 10px; }
.tvmid { height: 59px; color: #0c0c0c; }
.ses { display: flex; align-items: center; height: 23px; padding-left: 3px; font-size: 11px; letter-spacing: -.2px; }
.ses i, .pe i { border: 4px solid transparent; border-top: 6px solid #22262a; border-bottom: 0; }
.ses span { margin-left: 4px; width: 163px; }
.pe { display: flex; align-items: center; height: 32px; padding-left: 5px; font-size: 8.800px; letter-spacing: -.38px; }
.pe span { margin: 0 4px; }
.arrow { margin-left: auto; margin-right: 8px; }
.tvweb { height: 21px; background: #181818; color: #66696c; font-size: 9px; line-height: 17px; text-align: right; padding-right: 8px; text-decoration: underline; }
```
